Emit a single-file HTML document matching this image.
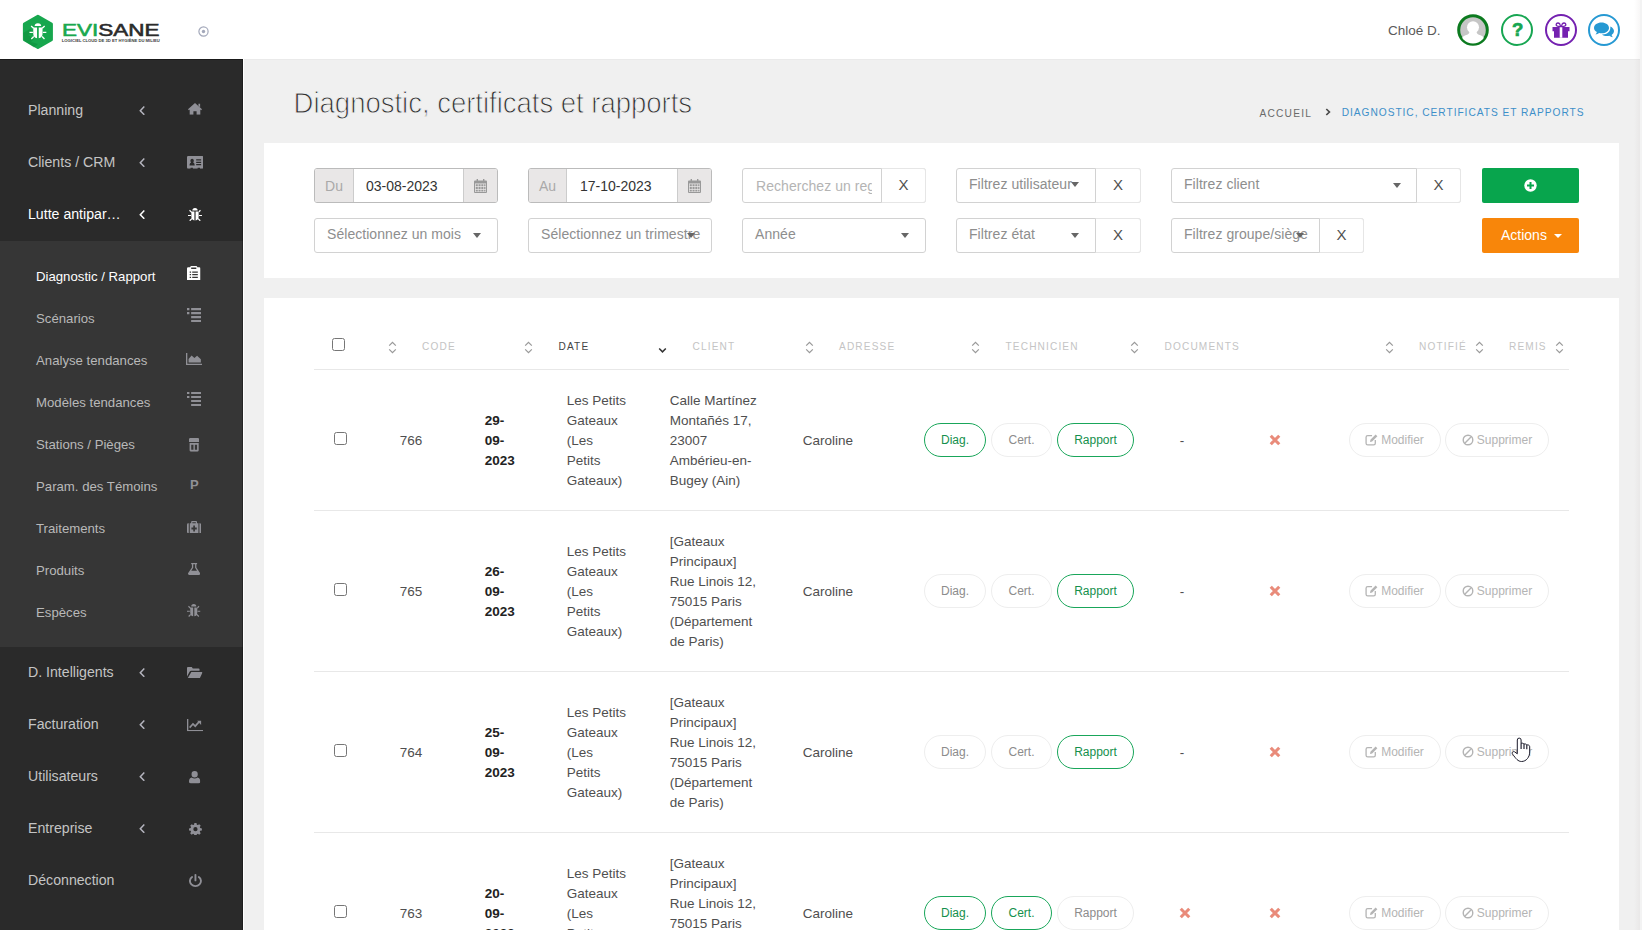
<!DOCTYPE html>
<html lang="fr">
<head>
<meta charset="utf-8">
<title>Evisane - Diagnostic, certificats et rapports</title>
<style>
*{box-sizing:border-box;margin:0;padding:0}
html,body{width:1642px;height:930px;overflow:hidden;background:#f0f0f0;font-family:"Liberation Sans",sans-serif;color:#4a4a4a}
body{position:relative}
svg{display:block}
.abs{position:absolute}
/* top bar */
#topbar{position:absolute;left:0;top:0;width:1642px;height:59px;background:#fff}
/* sidebar */
#sidebar{position:absolute;left:0;top:59px;width:244px;height:871px;background:#2a2a2a;border-right:1px solid #fff;box-shadow:inset 0 1px 0 #1a1a1a,inset -1px 0 0 #1e1e1e}
#submenu{position:absolute;left:0;top:182px;width:243px;height:406px;background:#363636;box-shadow:inset -1px 0 0 #262626}
.mi{position:absolute;left:28px;font-size:14.15px;color:#c4c4c4;white-space:nowrap;line-height:18px}
.mi.act{color:#fff}
.si{position:absolute;left:36px;font-size:13.2px;color:#b9b9b9;white-space:nowrap;line-height:16px}
.si.act{color:#fff}
.chev{position:absolute;left:138.6px;width:6px;height:9.4px}
.ico{position:absolute}
/* content */
#title{position:absolute;left:293.6px;top:85.7px;font-size:27.6px;line-height:36px;color:#303030;white-space:nowrap;letter-spacing:-0.05px;-webkit-text-stroke:.9px #f0f0f0;transform:scaleY(1.07);transform-origin:0 78%}
.card{position:absolute;background:#fff}
.fld{position:absolute;height:35px;border:1px solid #d2d2d2;border-radius:3px;background:#fff;font-size:15px;color:#8a8a8a;white-space:nowrap}
.addon{position:absolute;top:0;height:33px;background:#e9e7e7;color:#a9a9a9;font-size:14px;line-height:35px;text-align:center}
.xbtn{position:absolute;top:-1px;height:35px;border:1px solid #e6e6e6;border-left-color:#d2d2d2;border-radius:0 3px 3px 0;color:#505050;font-size:15px;line-height:32px;text-align:center;background:#fff}
.ph{position:absolute;top:0;line-height:31px;font-size:14px;color:#8e8e8e;letter-spacing:0.05px}
.caret{position:absolute;width:0;height:0;border-left:4px solid transparent;border-right:4px solid transparent;border-top:5px solid #666}
.th{position:absolute;top:341px;font-size:10.1px;letter-spacing:1.15px;color:#c4c4c4;line-height:12px;white-space:nowrap}
.th.dk{color:#444}
.sort{position:absolute;top:341px;width:9px;height:13px}
.hr{position:absolute;left:314px;width:1255px;height:1px;background:#e8e8e8}
.cb{position:absolute;width:13px;height:13px;border:1px solid #767676;border-radius:2.5px;background:#fff}
.td{position:absolute;font-size:13.5px;line-height:20px;color:#4f4f4f;white-space:nowrap}
.td.b{font-weight:bold;color:#222}
.pill{position:absolute;height:34px;border:1px solid #eee;border-radius:18px;font-size:12px;line-height:32px;text-align:center;color:#8c8c8c;background:#fff;white-space:nowrap}
.pill.g{border-color:#19a65a;color:#14904c;border-width:1.5px;line-height:32px}
.pill.m{color:#b4b4b4}
.rx{position:absolute;width:12px;height:12px}
</style>
</head>
<body>
<svg width="0" height="0" style="position:absolute">
<defs>
<symbol id="chev" viewBox="0 0 6 9.4" preserveAspectRatio="none"><path d="M5.3.6 1.3 4.7l4 4.1" fill="none" stroke="currentColor" stroke-width="1.5"/></symbol>
<symbol id="sort" viewBox="0 0 9 13"><path d="M1.2 4.6 4.5 1.4 7.8 4.6M1.2 8.4 4.5 11.6 7.8 8.4" fill="none" stroke="#999" stroke-width="1.25"/></symbol>
<symbol id="rx" viewBox="0 0 11 11"><path d="M1.6 1.6 9.4 9.4M9.4 1.6 1.6 9.4" fill="none" stroke="#e98b7a" stroke-width="2.8"/></symbol>

<symbol id="i-home" viewBox="0 0 15 12" preserveAspectRatio="none"><path d="M7.5 0 15 6.3l-.9 1.1-.9-.7V12H9.2V8.3H5.8V12H1.8V6.7l-.9.7L0 6.3zM11.2.7H13v3.6l-1.8-1.5z"/></symbol>
<symbol id="i-card" viewBox="0.3 0.5 17.4 13" preserveAspectRatio="none"><path fill-rule="evenodd" d="M1.5.5h15a1.2 1.2 0 0 1 1.2 1.2v10.6a1.2 1.2 0 0 1-1.2 1.2H14v-1h-2.5v1h-5v-1H4v1H1.5a1.2 1.2 0 0 1-1.2-1.2V1.7A1.2 1.2 0 0 1 1.5.5zM3 10.3h5.4c0-2.1-.8-3-1.7-3.2.5-.4.8-.9.8-1.7 0-1.1-.8-2-1.8-2s-1.8.9-1.8 2c0 .8.3 1.3.8 1.7-.9.2-1.7 1.1-1.7 3.2zM10 3.8v1.3h5.2V3.8zm0 2.5v1.3h5.2V6.3zm0 2.5v1.3h5.2V8.8z"/></symbol>
<symbol id="i-bug" viewBox="0.9 0.9 14.2 13.6" preserveAspectRatio="none"><path d="M5.3 3.6a2.7 2.7 0 0 1 5.4 0zM4.3 4.6h3.1v9.2c-1.9-.3-3.1-1.8-3.1-3.8zM8.6 4.6h3.1V10c0 2-1.2 3.5-3.1 3.8zM.9 8h3v1.2h-3zM12.1 8h3v1.2h-3zM4.2 5.9 2 3.7l.9-.9 2.2 2.2zM11.8 5.9 14 3.7l-.9-.9-2.2 2.2zM4.4 11.4 2.2 13.6l.9.9 2.2-2.2zM11.6 11.4l2.2 2.2-.9.9-2.2-2.2z"/></symbol>
<symbol id="i-clip" viewBox="2.2 1 11.6 14" preserveAspectRatio="none"><path fill-rule="evenodd" d="M6 1h4a1 1 0 0 1 1 1v.3h1.7a1.1 1.1 0 0 1 1.1 1.1v10.5a1.1 1.1 0 0 1-1.1 1.1H3.3a1.1 1.1 0 0 1-1.1-1.1V3.4a1.1 1.1 0 0 1 1.1-1.1H5V2a1 1 0 0 1 1-1zM5.8 2.4v1.5h4.4V2.4zM4.5 6.2v1.2h1.2V6.2zm2.2 0v1.2h4.8V6.2zM4.5 8.7v1.2h1.2V8.7zm2.2 0v1.2h4.8V8.7zM4.5 11.2v1.2h1.2v-1.2zm2.2 0v1.2h4.8v-1.2z"/></symbol>
<symbol id="i-list" viewBox="0 0 14 14" preserveAspectRatio="none"><path d="M0 0h2.4v2.1H0zM4.1 0H14v2.1H4.1zM0 4h2.4v2.1H0zM4.1 4H14v2.1H4.1zM4.1 7.9H14V10H4.1zM4.1 11.9H14V14H4.1z"/></symbol>
<symbol id="i-area" viewBox="0.5 1 17 12" preserveAspectRatio="none"><path d="M.5 1h1.4v10.8H17.5V13H.5zM3.2 10.6V7l3.2-3.6 3 2.6 2.8-2.2 4 3.4v3.4z"/></symbol>
<symbol id="i-trap" viewBox="1 1 12 14" preserveAspectRatio="none"><path fill-rule="evenodd" d="M2.5 1h9A1.5 1.5 0 0 1 13 2.5V5H1V2.5A1.5 1.5 0 0 1 2.5 1zM1.7 6h10.6v7.5A1.5 1.5 0 0 1 10.8 15H3.2a1.5 1.5 0 0 1-1.5-1.5zM3.6 7.8v5.3h2.6V7.8zm4.2 0v5.3h2.6V7.8z"/></symbol>
<symbol id="i-med" viewBox="0.5 1 17 13" preserveAspectRatio="none"><path fill-rule="evenodd" d="M6.5 1h5a1 1 0 0 1 1 1v1.5h-1.4v-1.1H6.9v1.1H5.5V2a1 1 0 0 1 1-1zM.5 5a1.5 1.5 0 0 1 1.5-1.5h.6V14H2A1.5 1.5 0 0 1 .5 12.5zM15.4 3.5h.6A1.5 1.5 0 0 1 17.5 5v7.5A1.5 1.5 0 0 1 16 14h-.6zM3.8 3.5h10.4V14H3.8zM8 5.8V8H5.8v2H8v2.2h2V10h2.2V8H10V5.8z"/></symbol>
<symbol id="i-flask" viewBox="1.38 1 13.24 14" preserveAspectRatio="none"><path fill-rule="evenodd" d="M4.8 1h6.4v1.4h-.8v3.8l4 6.6c.6 1.1-.1 2.2-1.3 2.2H2.9c-1.2 0-1.9-1.1-1.3-2.2l4-6.6V2.4h-.8zM7 2.4v4.2L4.9 10h6.2L9 6.6V2.4z"/></symbol>
<symbol id="i-folder" viewBox="0.5 1 17.32 12" preserveAspectRatio="none"><path d="M1.5 1h4.3l1.2 1.5h6.5a1 1 0 0 1 1 1V5H5.2a2 2 0 0 0-1.8 1.1L.5 11V2a1 1 0 0 1 1-1zM5.3 6.2h11.8c.6 0 .9.5.6 1l-2.5 4.9a1.5 1.5 0 0 1-1.3.9H1.2z"/></symbol>
<symbol id="i-line" viewBox="0.5 1 17 12" preserveAspectRatio="none"><path d="M.5 1h1.4v10.8H17.5V13H.5z"/><path d="M3.3 9.5 6.8 5.8l2.4 2.3 4-4.3" fill="none" stroke="currentColor" stroke-width="1.7"/><path d="M11.2 2.6h4.2v4.3z"/></symbol>
<symbol id="i-user" viewBox="1.2 1.5 11.6 13" preserveAspectRatio="none"><path d="M7 1.5a3.2 3.4 0 1 1 0 6.8 3.2 3.4 0 0 1 0-6.8zM4 8.3c.8.7 1.9 1.1 3 1.1s2.2-.4 3-1.1c1.8.3 2.8 1.8 2.8 4.2 0 1.3-.8 2-1.9 2H3.1c-1.1 0-1.9-.7-1.9-2 0-2.4 1-3.9 2.8-4.2z"/></symbol>
<symbol id="i-cog" viewBox="0.7 0.7 14.6 14.6" preserveAspectRatio="none"><path fill-rule="evenodd" d="M6.8 1h2.4l.4 1.9 1.1.5 1.6-1.1 1.7 1.7-1.1 1.6.5 1.1 1.9.4v2.4l-1.9.4-.5 1.1 1.1 1.6-1.7 1.7-1.6-1.1-1.1.5-.4 1.9H6.8l-.4-1.9-1.1-.5-1.6 1.1L2 12.6l1.1-1.6-.5-1.1-1.9-.4V7.1l1.9-.4.5-1.1L2 4l1.7-1.7 1.6 1.1 1.1-.5zM8 5.6a2.4 2.4 0 1 0 0 4.8 2.4 2.4 0 0 0 0-4.8z" transform="translate(0,-0.3)"/></symbol>
<symbol id="i-power" viewBox="1.45 0.35 13.1 14.35" preserveAspectRatio="none"><path d="M4.6 3.7A5.6 5.6 0 1 0 11.4 3.7" fill="none" stroke="currentColor" stroke-width="1.9" stroke-linecap="round"/><path d="M8 1.3v6.2" fill="none" stroke="currentColor" stroke-width="1.9" stroke-linecap="round"/></symbol>
</defs>
</svg>

<div id="topbar">
<svg class="abs" style="left:20px;top:12px" width="36" height="40" viewBox="0 0 36 40">
<path d="M17.9 4.35 31.41 12.15V27.75L17.9 35.55 4.39 27.75V12.15Z" fill="#17a74e" stroke="#17a74e" stroke-width="3" stroke-linejoin="round"/>
<path d="M3.2 21 10 17l3 3-5 3 6 4-3 3 7 2-4 3.5L4 28.5Z" fill="#0c8a37" opacity=".45"/>
<g fill="#fff" transform="translate(17.9 20.6) scale(.86) translate(-18 -20)"><path d="M14.2 12.4a3.8 3.4 0 0 1 7.6 0z"/><path d="M12.6 14h4.4v12.6c-2.8-.4-4.4-2.6-4.4-5.4zM19 14h4.4v7.2c0 2.8-1.6 5-4.4 5.4z"/>
<path d="M8.2 19h4v1.6h-4zM23.8 19h4v1.6h-4z"/><path d="M12.4 15.6 9.6 12.8 10.7 11.7 13.5 14.5zM23.6 15.6 26.4 12.8 25.3 11.7 22.5 14.5zM12.6 24 9.8 26.8 10.9 27.9 13.7 25.1zM23.4 24 26.2 26.8 25.1 27.9 22.3 25.1z"/></g>
</svg>
<svg class="abs" style="left:60px;top:18px" width="104" height="28" viewBox="0 0 104 28">
<text x="2" y="17.7" font-family="Liberation Sans, sans-serif" font-size="16" stroke-width=".55" textLength="97.5" lengthAdjust="spacingAndGlyphs"><tspan fill="#19a84e" stroke="#19a84e">EVI</tspan><tspan fill="#2b2b2b" stroke="#2b2b2b">SANE</tspan></text>
<text x="1.8" y="24.3" font-family="Liberation Sans, sans-serif" font-size="4.1" font-weight="bold" fill="#3a3a3a" textLength="97.9" lengthAdjust="spacingAndGlyphs">LOGICIEL CLOUD DE 3D ET HYGIÈNE DU MILIEU</text>
</svg>
<svg class="abs" style="left:197px;top:25px" width="13" height="13" viewBox="0 0 13 13"><circle cx="6.5" cy="6.5" r="4.6" fill="none" stroke="#a3a8ba" stroke-width="1.2"/><circle cx="6.5" cy="6.5" r="1.7" fill="#a3a8ba"/></svg>
<div class="abs" style="left:1388px;top:21px;font-size:13.5px;line-height:20px;color:#5a5a5a;white-space:nowrap">Chloé D.</div>
<svg class="abs" style="left:1456px;top:13px" width="34" height="34" viewBox="0 0 34 34">
<defs><clipPath id="avc"><circle cx="17" cy="17" r="13.5"/></clipPath></defs>
<circle cx="17" cy="17" r="14.3" fill="#c6c6c6" stroke="#0c7a1f" stroke-width="3"/>
<g clip-path="url(#avc)" fill="#fff"><circle cx="17" cy="14.2" r="6"/><path d="M13.5 18.5h7c.2 2.3 1.5 3 4 3.8 3 1 4.5 3 4.5 9.7H5c0-6.7 1.5-8.7 4.5-9.7 2.5-.8 3.8-1.5 4-3.8z"/></g>
</svg>
<svg class="abs" style="left:1500px;top:13px" width="34" height="34" viewBox="0 0 34 34"><circle cx="17" cy="17" r="15" fill="#fff" stroke="#17a652" stroke-width="2"/>
<text x="17.6" y="22.7" text-anchor="middle" font-family="Liberation Sans, sans-serif" font-size="18.5" font-weight="bold" fill="#17a652" stroke="#17a652" stroke-width=".7">?</text></svg>
<svg class="abs" style="left:1544px;top:13px" width="34" height="34" viewBox="0 0 34 34"><circle cx="17" cy="17" r="15" fill="#fff" stroke="#7421b0" stroke-width="2"/>
<g fill="#7421b0"><path d="M8.5 14h17v4.2h-17zM10 18.2h14v6.6H10z"/><path d="M15.7 14h2.6v10.8h-2.6z" fill="#fff"/><path d="M16.6 13.6c-3.3.2-4.8-.9-4.4-2.4.5-1.6 2.6-1.5 3.5-.3zM17.4 13.6c3.3.2 4.8-.9 4.4-2.4-.5-1.6-2.6-1.5-3.5-.3z" fill="none" stroke="#7421b0" stroke-width="1.3"/></g></svg>
<svg class="abs" style="left:1587px;top:13px" width="34" height="34" viewBox="0 0 34 34"><circle cx="17" cy="17" r="15" fill="#fff" stroke="#2699d3" stroke-width="2"/>
<g fill="#2699d3"><path d="M14.5 9.5c4.2 0 7.5 2.4 7.5 5.4s-3.3 5.4-7.5 5.4c-.8 0-1.6-.1-2.3-.3-1.1.9-2.4 1.4-3.7 1.5.7-.7 1.2-1.5 1.4-2.5C8.1 18 7 16.5 7 14.9c0-3 3.3-5.4 7.5-5.4z"/>
<path d="M23.3 13.5c2.2.9 3.7 2.6 3.7 4.6 0 1.5-.9 2.9-2.4 3.8.2.9.7 1.7 1.4 2.4-1.3-.1-2.6-.6-3.7-1.5-.7.2-1.5.3-2.3.3-2 0-3.8-.6-5.1-1.6 5 .3 9.1-3 8.4-8z"/></g></svg>
</div>
<!--SB--><div id="sidebar"><div id="submenu"></div>
<div class="mi" style="top:41.9px">Planning</div><svg class="chev" style="top:46.9px;color:#b4b4be"><use href="#chev"/></svg><svg class="ico" style="left:188px;top:43.8px;color:#8f8f96" width="14" height="11.8" fill="currentColor"><use href="#i-home"/></svg>
<div class="mi" style="top:93.9px">Clients / CRM</div><svg class="chev" style="top:98.9px;color:#b4b4be"><use href="#chev"/></svg><svg class="ico" style="left:186.8px;top:97.4px;color:#8f8f96" width="16.5" height="12.7" fill="currentColor"><use href="#i-card"/></svg>
<div class="mi act" style="top:145.9px">Lutte antipar…</div><svg class="chev" style="top:150.9px;color:#fff"><use href="#chev"/></svg><svg class="ico" style="left:188px;top:149px;color:#fff" width="14" height="13.2" fill="currentColor"><use href="#i-bug"/></svg>
<div class="mi" style="top:604.1px">D. Intelligents</div><svg class="chev" style="top:609.1px;color:#b4b4be"><use href="#chev"/></svg><svg class="ico" style="left:187.1px;top:608.1px;color:#8f8f96" width="15.5" height="11.3" fill="currentColor"><use href="#i-folder"/></svg>
<div class="mi" style="top:656.1px">Facturation</div><svg class="chev" style="top:661.1px;color:#b4b4be"><use href="#chev"/></svg><svg class="ico" style="left:187.1px;top:660.4px;color:#8f8f96" width="16.1" height="12.2" fill="currentColor"><use href="#i-line"/></svg>
<div class="mi" style="top:708.1px">Utilisateurs</div><svg class="chev" style="top:713.1px;color:#b4b4be"><use href="#chev"/></svg><svg class="ico" style="left:189.4px;top:712px;color:#8f8f96" width="11.3" height="12.5" fill="currentColor"><use href="#i-user"/></svg>
<div class="mi" style="top:760.1px">Entreprise</div><svg class="chev" style="top:765.1px;color:#b4b4be"><use href="#chev"/></svg><svg class="ico" style="left:188.7px;top:763.6px;color:#8f8f96" width="12.9" height="12.9" fill="currentColor"><use href="#i-cog"/></svg>
<div class="mi" style="top:812.1px">Déconnection</div><svg class="ico" style="left:188.7px;top:814.9px;color:#8f8f96" width="12.9" height="12.9" fill="currentColor"><use href="#i-power"/></svg>
<div class="si act" style="top:210.1px">Diagnostic / Rapport</div><svg class="ico" style="left:187.3px;top:206.5px;color:#fff" width="13.5" height="14.7" fill="currentColor"><use href="#i-clip"/></svg>
<div class="si" style="top:252.1px">Scénarios</div><svg class="ico" style="left:186.8px;top:248.7px;color:#909096" width="14.1" height="14.2" fill="currentColor"><use href="#i-list"/></svg>
<div class="si" style="top:294.1px">Analyse tendances</div><svg class="ico" style="left:185.8px;top:293.9px;color:#909096" width="16.1" height="12" fill="currentColor"><use href="#i-area"/></svg>
<div class="si" style="top:336.1px">Modèles tendances</div><svg class="ico" style="left:186.8px;top:332.9px;color:#909096" width="14.1" height="14" fill="currentColor"><use href="#i-list"/></svg>
<div class="si" style="top:378.1px">Stations / Pièges</div><svg class="ico" style="left:188.8px;top:379px;color:#909096" width="10.3" height="13.7" fill="currentColor"><use href="#i-trap"/></svg>
<div class="si" style="top:420.1px">Param. des Témoins</div><div class="abs" style="left:190px;top:418.3px;font-size:13px;font-weight:bold;line-height:16px;color:#909096">P</div>
<div class="si" style="top:462.1px">Traitements</div><svg class="ico" style="left:186.8px;top:462px;color:#909096" width="14.2" height="12.2" fill="currentColor"><use href="#i-med"/></svg>
<div class="si" style="top:504.1px">Produits</div><svg class="ico" style="left:188px;top:503.9px;color:#909096" width="12.3" height="12" fill="currentColor"><use href="#i-flask"/></svg>
<div class="si" style="top:546.1px">Espèces</div><svg class="ico" style="left:187.1px;top:545.2px;color:#909096" width="13.5" height="12.9" fill="currentColor"><use href="#i-bug"/></svg>
</div><!--/SB-->
<div id="title">Diagnostic, certificats et rapports</div>
<div class="card" id="filters" style="left:264px;top:143px;width:1355px;height:135px"></div>
<div class="fld" style="left:314px;top:168px;width:184px;height:35px;border-color:#bbb"><div class="addon" style="left:0;width:39px;border-right:1px solid #ccc;border-radius:2px 0 0 2px">Du</div><div class="abs" style="left:51px;top:0;line-height:35px;font-size:14px;color:#333">03-08-2023</div><div class="addon" style="left:148px;width:34px;border-left:1px solid #ccc;border-radius:0 2px 2px 0"><svg class="abs" style="left:10px;top:10px" width="13" height="14" viewBox="0 0 13 14"><path fill-rule="evenodd" d="M2.6 0h1.4v1.5h5V0h1.4v1.5H12a1 1 0 0 1 1 1V13a1 1 0 0 1-1 1H1a1 1 0 0 1-1-1V2.5a1 1 0 0 1 1-1h1.6zM1 4.5V13h11V4.5zM1.7 5.2h2.1v2.1H1.7zm2.8 0h2.1v2.1H4.5zm2.8 0h2.1v2.1H7.3zm2.8 0h1.4v2.1h-1.4zM1.7 8h2.1v2.1H1.7zm2.8 0h2.1v2.1H4.5zm2.8 0h2.1v2.1H7.3zm2.8 0h1.4v2.1h-1.4zM1.7 10.8h2.1v1.6H1.7zm2.8 0h2.1v1.6H4.5zm2.8 0h2.1v1.6H7.3zm2.8 0h1.4v1.6h-1.4z" fill="#999"/></svg></div></div>
<div class="fld" style="left:528px;top:168px;width:184px;height:35px;border-color:#bbb"><div class="addon" style="left:0;width:38px;border-right:1px solid #ccc;border-radius:2px 0 0 2px">Au</div><div class="abs" style="left:51px;top:0;line-height:35px;font-size:14px;color:#333">17-10-2023</div><div class="addon" style="left:148px;width:34px;border-left:1px solid #ccc;border-radius:0 2px 2px 0"><svg class="abs" style="left:10px;top:10px" width="13" height="14" viewBox="0 0 13 14"><path fill-rule="evenodd" d="M2.6 0h1.4v1.5h5V0h1.4v1.5H12a1 1 0 0 1 1 1V13a1 1 0 0 1-1 1H1a1 1 0 0 1-1-1V2.5a1 1 0 0 1 1-1h1.6zM1 4.5V13h11V4.5zM1.7 5.2h2.1v2.1H1.7zm2.8 0h2.1v2.1H4.5zm2.8 0h2.1v2.1H7.3zm2.8 0h1.4v2.1h-1.4zM1.7 8h2.1v2.1H1.7zm2.8 0h2.1v2.1H4.5zm2.8 0h2.1v2.1H7.3zm2.8 0h1.4v2.1h-1.4zM1.7 10.8h2.1v1.6H1.7zm2.8 0h2.1v1.6H4.5zm2.8 0h2.1v1.6H7.3zm2.8 0h1.4v1.6h-1.4z" fill="#999"/></svg></div></div>
<div class="fld" style="left:742px;top:168px;width:184px;height:35px"><div class="ph" style="left:13px;width:116px;overflow:hidden;color:#b4b4b4;line-height:34px">Recherchez un reg</div><div class="xbtn" style="left:138px;width:45px">X</div></div>
<div class="fld" style="left:956px;top:168px;width:185px;height:35px"><div class="ph" style="left:12px">Filtrez utilisateur</div><div class="caret" style="left:114px;top:13px"></div><div class="xbtn" style="left:138px;width:46px">X</div></div>
<div class="fld" style="left:1171px;top:168px;width:290px;height:35px"><div class="ph" style="left:12px">Filtrez client</div><div class="caret" style="left:221px;top:14px"></div><div class="xbtn" style="left:244px;width:45px">X</div></div>
<div class="abs" style="left:1482px;top:168px;width:97px;height:35px;background:#08a54d;border-radius:2px"><svg class="abs" style="left:42px;top:11px" width="13" height="13" viewBox="0 0 13 13"><circle cx="6.5" cy="6.5" r="6.2" fill="#fff"/><path d="M5.5 3h2v2.5H10v2H7.5V10h-2V7.5H3v-2h2.5z" fill="#08a54d"/></svg></div>
<div class="fld" style="left:314px;top:218px;width:184px;height:35px"><div class="ph" style="left:12px">Sélectionnez un mois</div><div class="caret" style="left:158px;top:14px"></div></div>
<div class="fld" style="left:528px;top:218px;width:184px;height:35px"><div class="ph" style="left:12px">Sélectionnez un trimestre</div><div class="caret" style="left:158px;top:14px"></div></div>
<div class="fld" style="left:742px;top:218px;width:184px;height:35px"><div class="ph" style="left:12px">Année</div><div class="caret" style="left:158px;top:14px"></div></div>
<div class="fld" style="left:956px;top:218px;width:185px;height:35px"><div class="ph" style="left:12px">Filtrez état</div><div class="caret" style="left:114px;top:14px"></div><div class="xbtn" style="left:138px;width:46px">X</div></div>
<div class="fld" style="left:1171px;top:218px;width:193px;height:35px"><div class="ph" style="left:12px">Filtrez groupe/siège</div><div class="caret" style="left:124px;top:14px"></div><div class="xbtn" style="left:147px;width:45px">X</div></div>
<div class="abs" style="left:1482px;top:218px;width:97px;height:35px;background:#f8860a;border-radius:2px;color:#fff;font-size:14px;line-height:35px;padding-left:19px">Actions<div class="caret" style="left:72px;top:16px;border-top-color:#fff;border-width:4px 4px 0"></div></div>
<div class="abs" style="left:1259.5px;top:107.4px;font-size:10.2px;letter-spacing:1.2px;line-height:14px;color:#6a6a6a;white-space:nowrap">ACCUEIL</div><svg class="abs" style="left:1325px;top:108px" width="6" height="8" viewBox="0 0 6 8"><path d="M1.3 1 4.4 4 1.3 7" fill="none" stroke="#4a4a4a" stroke-width="1.7"/></svg><div class="abs" style="left:1341.7px;top:105.6px;font-size:10.2px;letter-spacing:0.96px;line-height:14px;color:#3d8fc9;white-space:nowrap">DIAGNOSTIC, CERTIFICATS ET RAPPORTS</div>

<div class="card" id="tablecard" style="left:264px;top:298px;width:1355px;height:632px"></div>
<div class="cb" style="left:332px;top:338px"></div>
<svg class="sort" style="left:387.8px"><use href="#sort"/></svg><svg class="sort" style="left:524.3px"><use href="#sort"/></svg><svg class="sort" style="left:804.8px"><use href="#sort"/></svg><svg class="sort" style="left:970.8px"><use href="#sort"/></svg><svg class="sort" style="left:1130px"><use href="#sort"/></svg><svg class="sort" style="left:1385px"><use href="#sort"/></svg><svg class="sort" style="left:1475.3px"><use href="#sort"/></svg><svg class="sort" style="left:1555.3px"><use href="#sort"/></svg><svg class="abs" style="left:658px;top:347px" width="9" height="7" viewBox="0 0 9 7"><path d="M1.2 1.4 4.5 4.8 7.8 1.4" fill="none" stroke="#333" stroke-width="1.5"/></svg>
<div class="th" style="left:422px">CODE</div><div class="th dk" style="left:558.5px">DATE</div><div class="th" style="left:692.5px">CLIENT</div><div class="th" style="left:839px">ADRESSE</div><div class="th" style="left:1005.5px">TECHNICIEN</div><div class="th" style="left:1164.5px">DOCUMENTS</div><div class="th" style="left:1419px">NOTIFIÉ</div><div class="th" style="left:1509px">REMIS</div>
<div class="hr" style="top:369px"></div>
<div class="cb" style="left:334px;top:432px"></div><div class="td" style="left:399.7px;top:430.6px">766</div><div class="td b" style="left:484.7px;top:410.6px">29-<br>09-<br>2023</div><div class="td" style="left:566.7px;top:390.6px">Les Petits<br>Gateaux<br>(Les<br>Petits<br>Gateaux)</div><div class="td" style="left:669.7px;top:390.6px">Calle Martínez<br>Montañés 17,<br>23007<br>Ambérieu-en-<br>Bugey (Ain)</div><div class="td" style="left:802.7px;top:430.6px">Caroline</div>
<div class="pill g" style="left:924px;top:423px;width:62px">Diag.</div><div class="pill" style="left:991px;top:423px;width:61px">Cert.</div><div class="pill g" style="left:1057px;top:423px;width:77px">Rapport</div><div class="td" style="left:1179.7px;top:430.6px">-</div><svg class="rx" style="left:1269px;top:434.2px"><use href="#rx"/></svg><div class="pill m" style="left:1349px;top:423px;width:92px;padding-left:15px"><svg class="abs" style="left:14.5px;top:8.8px" width="13" height="13" viewBox="0 0 12 12"><path d="M9.5 6.5v3a1.5 1.5 0 0 1-1.5 1.5H2.5A1.5 1.5 0 0 1 1 9.5V4a1.5 1.5 0 0 1 1.5-1.5h4" fill="none" stroke="#b4b4b4" stroke-width="1.2"/><path d="M5 6.2 9.8 1.4l1.6 1.6L6.6 7.8 4.6 8.2z" fill="#b4b4b4"/></svg>Modifier</div><div class="pill m" style="left:1445px;top:423px;width:104px;padding-left:15px"><svg class="abs" style="left:16px;top:10px" width="12" height="12" viewBox="0 0 12 12"><circle cx="6" cy="6" r="4.8" fill="none" stroke="#b4b4b4" stroke-width="1.4"/><path d="M2.8 9.2 9.2 2.8" stroke="#b4b4b4" stroke-width="1.4"/></svg>Supprimer</div>
<div class="hr" style="top:510px"></div>
<div class="cb" style="left:334px;top:583px"></div><div class="td" style="left:399.7px;top:581.6px">765</div><div class="td b" style="left:484.7px;top:561.6px">26-<br>09-<br>2023</div><div class="td" style="left:566.7px;top:541.6px">Les Petits<br>Gateaux<br>(Les<br>Petits<br>Gateaux)</div><div class="td" style="left:669.7px;top:531.6px">[Gateaux<br>Principaux]<br>Rue Linois 12,<br>75015 Paris<br>(Département<br>de Paris)</div><div class="td" style="left:802.7px;top:581.6px">Caroline</div>
<div class="pill" style="left:924px;top:574px;width:62px">Diag.</div><div class="pill" style="left:991px;top:574px;width:61px">Cert.</div><div class="pill g" style="left:1057px;top:574px;width:77px">Rapport</div><div class="td" style="left:1179.7px;top:581.6px">-</div><svg class="rx" style="left:1269px;top:585.2px"><use href="#rx"/></svg><div class="pill m" style="left:1349px;top:574px;width:92px;padding-left:15px"><svg class="abs" style="left:14.5px;top:8.8px" width="13" height="13" viewBox="0 0 12 12"><path d="M9.5 6.5v3a1.5 1.5 0 0 1-1.5 1.5H2.5A1.5 1.5 0 0 1 1 9.5V4a1.5 1.5 0 0 1 1.5-1.5h4" fill="none" stroke="#b4b4b4" stroke-width="1.2"/><path d="M5 6.2 9.8 1.4l1.6 1.6L6.6 7.8 4.6 8.2z" fill="#b4b4b4"/></svg>Modifier</div><div class="pill m" style="left:1445px;top:574px;width:104px;padding-left:15px"><svg class="abs" style="left:16px;top:10px" width="12" height="12" viewBox="0 0 12 12"><circle cx="6" cy="6" r="4.8" fill="none" stroke="#b4b4b4" stroke-width="1.4"/><path d="M2.8 9.2 9.2 2.8" stroke="#b4b4b4" stroke-width="1.4"/></svg>Supprimer</div>
<div class="hr" style="top:671px"></div>
<div class="cb" style="left:334px;top:744px"></div><div class="td" style="left:399.7px;top:742.6px">764</div><div class="td b" style="left:484.7px;top:722.6px">25-<br>09-<br>2023</div><div class="td" style="left:566.7px;top:702.6px">Les Petits<br>Gateaux<br>(Les<br>Petits<br>Gateaux)</div><div class="td" style="left:669.7px;top:692.6px">[Gateaux<br>Principaux]<br>Rue Linois 12,<br>75015 Paris<br>(Département<br>de Paris)</div><div class="td" style="left:802.7px;top:742.6px">Caroline</div>
<div class="pill" style="left:924px;top:735px;width:62px">Diag.</div><div class="pill" style="left:991px;top:735px;width:61px">Cert.</div><div class="pill g" style="left:1057px;top:735px;width:77px">Rapport</div><div class="td" style="left:1179.7px;top:742.6px">-</div><svg class="rx" style="left:1269px;top:746.2px"><use href="#rx"/></svg><div class="pill m" style="left:1349px;top:735px;width:92px;padding-left:15px"><svg class="abs" style="left:14.5px;top:8.8px" width="13" height="13" viewBox="0 0 12 12"><path d="M9.5 6.5v3a1.5 1.5 0 0 1-1.5 1.5H2.5A1.5 1.5 0 0 1 1 9.5V4a1.5 1.5 0 0 1 1.5-1.5h4" fill="none" stroke="#b4b4b4" stroke-width="1.2"/><path d="M5 6.2 9.8 1.4l1.6 1.6L6.6 7.8 4.6 8.2z" fill="#b4b4b4"/></svg>Modifier</div><div class="pill m" style="left:1445px;top:735px;width:104px;padding-left:15px"><svg class="abs" style="left:16px;top:10px" width="12" height="12" viewBox="0 0 12 12"><circle cx="6" cy="6" r="4.8" fill="none" stroke="#b4b4b4" stroke-width="1.4"/><path d="M2.8 9.2 9.2 2.8" stroke="#b4b4b4" stroke-width="1.4"/></svg>Supprimer</div>
<div class="hr" style="top:832px"></div>
<div class="cb" style="left:334px;top:905px"></div><div class="td" style="left:399.7px;top:903.6px">763</div><div class="td b" style="left:484.7px;top:883.6px">20-<br>09-<br>2023</div><div class="td" style="left:566.7px;top:863.6px">Les Petits<br>Gateaux<br>(Les<br>Petits<br>Gateaux)</div><div class="td" style="left:669.7px;top:853.6px">[Gateaux<br>Principaux]<br>Rue Linois 12,<br>75015 Paris<br>(Département<br>de Paris)</div><div class="td" style="left:802.7px;top:903.6px">Caroline</div>
<div class="pill g" style="left:924px;top:896px;width:62px">Diag.</div><div class="pill g" style="left:991px;top:896px;width:61px">Cert.</div><div class="pill" style="left:1057px;top:896px;width:77px">Rapport</div><svg class="rx" style="left:1179px;top:907.2px"><use href="#rx"/></svg><svg class="rx" style="left:1269px;top:907.2px"><use href="#rx"/></svg><div class="pill m" style="left:1349px;top:896px;width:92px;padding-left:15px"><svg class="abs" style="left:14.5px;top:8.8px" width="13" height="13" viewBox="0 0 12 12"><path d="M9.5 6.5v3a1.5 1.5 0 0 1-1.5 1.5H2.5A1.5 1.5 0 0 1 1 9.5V4a1.5 1.5 0 0 1 1.5-1.5h4" fill="none" stroke="#b4b4b4" stroke-width="1.2"/><path d="M5 6.2 9.8 1.4l1.6 1.6L6.6 7.8 4.6 8.2z" fill="#b4b4b4"/></svg>Modifier</div><div class="pill m" style="left:1445px;top:896px;width:104px;padding-left:15px"><svg class="abs" style="left:16px;top:10px" width="12" height="12" viewBox="0 0 12 12"><circle cx="6" cy="6" r="4.8" fill="none" stroke="#b4b4b4" stroke-width="1.4"/><path d="M2.8 9.2 9.2 2.8" stroke="#b4b4b4" stroke-width="1.4"/></svg>Supprimer</div>

<svg class="abs" style="left:1511px;top:737px" width="20" height="26" viewBox="-1 -1 20 26"><path d="M5.3 2a1.9 1.9 0 0 1 3.8 0V5.3c1-.3 2.4-.1 2.9.7 1-.3 2.3 0 2.8.9 1.2-.3 2.9.3 2.9 1.8v5.3c0 5-3.4 9.5-8.2 9.5-3.5 0-5.5-2.8-8.9-7.3-1.3-1.7.8-3.4 2.3-2.2l2.4 1.8z" fill="#fff" stroke="#1b1b2b" stroke-width="1" stroke-linejoin="round"/><path d="M9.1 5.3v5.7M12 6v5M14.8 6.9v4.4" fill="none" stroke="#1b1b2b" stroke-width="1.15"/></svg>
<div class="abs" style="left:244px;top:59px;width:1398px;height:1px;background:#eaeaea"></div>
<div class="abs" style="left:1634px;top:0;width:6px;height:930px;background:linear-gradient(90deg,rgba(90,60,60,0),rgba(90,60,60,0.045))"></div>
<div class="abs" style="left:1640px;top:0;width:2px;height:930px;background:#f3f3f3"></div>
</body>
</html>
